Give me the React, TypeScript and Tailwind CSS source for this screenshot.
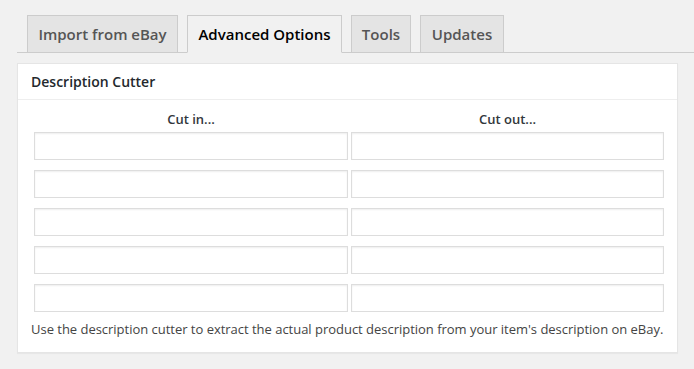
import React from "react";

const tabs = [
  { label: "Import from eBay", active: false, w: "w-[151px]" },
  { label: "Advanced Options", active: true, w: "w-[155px]" },
  { label: "Tools", active: false, w: "w-[60px]" },
  { label: "Updates", active: false, w: "w-[84px]" },
];

export default function App() {
  const rows = [0, 1, 2, 3, 4];
  return (
    <div
      className="w-[694px] h-[369px] bg-[#f1f1f1] pl-[17px] pt-[15px] overflow-hidden"
      style={{ fontFamily: '"Open Sans", "Noto Sans", sans-serif' }}
    >
      <div className="flex items-end gap-[9px] pl-[10px] border-b border-[#ccc]">
        {tabs.map((t) => (
          <div
            key={t.label}
            className={
              "-mb-px border py-[6px] text-center text-[15px] leading-[24px] font-semibold whitespace-nowrap " +
              t.w +
              " " +
              (t.active
                ? "bg-[#f1f1f1] text-[#000] border-[#ccc] border-b-[#f1f1f1]"
                : "bg-[#e4e4e4] text-[#555] border-[#ccc]")
            }
          >
            {t.label}
          </div>
        ))}
      </div>
      <div className="mt-[10px] mr-[16px] bg-white border border-[#e5e5e5] shadow-[0_1px_1px_rgba(0,0,0,0.04)]">
        <div className="h-[36px] flex items-center px-[13px] border-b border-[#eee] text-[14px] font-semibold text-[#23282d]">
          Description Cutter
        </div>
        <div className="pl-[16px] pr-[14px]">
          <div className="grid grid-cols-[314px_313px] gap-x-[3px] pt-[10px]">
            <div className="text-center text-[13px] font-semibold text-[#32373c] leading-[18px] h-[22px]">
              Cut in...
            </div>
            <div className="text-center text-[13px] font-semibold text-[#32373c] leading-[18px] h-[22px]">
              Cut out...
            </div>
          </div>
          <div className="grid grid-cols-[314px_313px] gap-x-[3px] gap-y-[10px]">
            {rows.map((r) => (
              <React.Fragment key={r}>
                <input
                  type="text"
                  className="h-[28px] border border-[#ddd] bg-white shadow-[inset_0_1px_2px_rgba(0,0,0,0.07)] outline-none"
                />
                <input
                  type="text"
                  className="h-[28px] border border-[#ddd] bg-white shadow-[inset_0_1px_2px_rgba(0,0,0,0.07)] outline-none"
                />
              </React.Fragment>
            ))}
          </div>
        </div>
        <p className="pl-[13px] pt-[8px] pb-[14px] text-[13px] leading-[18px] text-[#444] whitespace-nowrap tracking-[-0.02px]">
          Use the description cutter to extract the actual product description from your item's description on eBay.
        </p>
      </div>
    </div>
  );
}
